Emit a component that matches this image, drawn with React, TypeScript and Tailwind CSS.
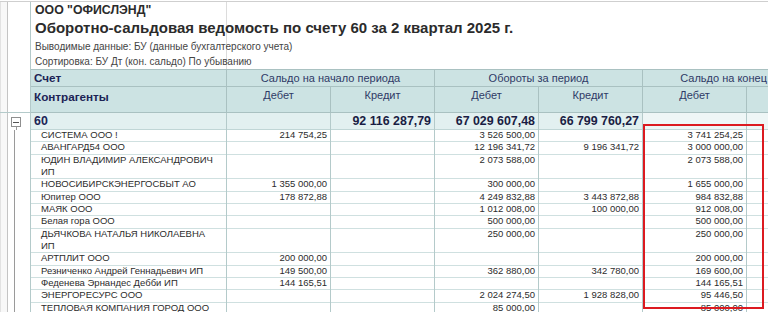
import React from 'react';

type Row = { name: string[]; v: string[] };

const rows: Row[] = [
  { name: ['СИСТЕМА ООО !'], v: ['214 754,25', '', '3 526 500,00', '', '3 741 254,25'] },
  { name: ['АВАНГАРД54 ООО'], v: ['', '', '12 196 341,72', '9 196 341,72', '3 000 000,00'] },
  { name: ['ЮДИН ВЛАДИМИР АЛЕКСАНДРОВИЧ', 'ИП'], v: ['', '', '2 073 588,00', '', '2 073 588,00'] },
  { name: ['НОВОСИБИРСКЭНЕРГОСБЫТ АО'], v: ['1 355 000,00', '', '300 000,00', '', '1 655 000,00'] },
  { name: ['Юпитер ООО'], v: ['178 872,88', '', '4 249 832,88', '3 443 872,88', '984 832,88'] },
  { name: ['МАЯК ООО'], v: ['', '', '1 012 008,00', '100 000,00', '912 008,00'] },
  { name: ['Белая гора ООО'], v: ['', '', '500 000,00', '', '500 000,00'] },
  { name: ['ДЬЯЧКОВА НАТАЛЬЯ НИКОЛАЕВНА', 'ИП'], v: ['', '', '250 000,00', '', '250 000,00'] },
  { name: ['АРТПЛИТ ООО'], v: ['200 000,00', '', '', '', '200 000,00'] },
  { name: ['Резниченко Андрей Геннадьевич ИП'], v: ['149 500,00', '', '362 880,00', '342 780,00', '169 600,00'] },
  { name: ['Феденева Эрнандес Дебби ИП'], v: ['144 165,51', '', '', '', '144 165,51'] },
  { name: ['ЭНЕРГОРЕСУРС ООО'], v: ['', '', '2 024 274,50', '1 928 828,00', '95 446,50'] },
  { name: ['ТЕПЛОВАЯ КОМПАНИЯ ГОРОД ООО'], v: ['', '', '85 000,00', '', '85 000,00'] },
];

// left strip with the tree lines
const Gutter: React.FC<{ tree?: boolean; bottom?: boolean }> = ({ tree, bottom }) => (
  <div className={`w-[31px] shrink-0 flex border-r border-[#b4caca] bg-white ${bottom ? 'border-b' : ''}`}>
    <div className="w-[8px] shrink-0 border-l border-r border-l-[#e2e2e2] border-r-[#c4c4c4] bg-[#f8f8f8]" />
    {tree && <div className="w-[7px] shrink-0 border-r border-[#9a9a9a]" />}
  </div>
);

const DataRow: React.FC<{ row: Row }> = ({ row }) => {
  const h = row.name.length > 1 ? 'h-[24.66px]' : 'h-[12.33px]';
  return (
    <div className={`flex ${h} text-[9.5px] leading-[12px] text-[#2c2c2c]`}>
      <Gutter tree />
      <div className="w-[196px] shrink-0 border-r border-b border-r-[#b4caca] border-b-[#cfe0e0] pl-[10px] -mt-px">
        {row.name.map((n) => (
          <div key={n} className="whitespace-nowrap">{n}</div>
        ))}
      </div>
      {row.v.map((x, i) => (
        <div
          key={i}
          className="w-[104px] shrink-0 border-r border-b border-r-[#b4caca] border-b-[#cfe0e0] text-right pr-[3px] -mt-px"
        >
          {x}
        </div>
      ))}
      <div className="w-[104px] shrink-0 border-r border-b border-r-[#b4caca] border-b-[#cfe0e0]" />
    </div>
  );
};

export default function App() {
  return (
    <div className="relative w-[768px] h-[312px] overflow-hidden bg-white font-['Liberation_Sans',Arial,sans-serif]">
      {/* report title */}
      <div className="flex h-[68px] mt-px border-t border-[#cfcfcf]">
        <Gutter />
        <div className="flex-1 min-w-0 pl-[4px] bg-[linear-gradient(to_right,transparent_195px,#dcdcdc_195px,#dcdcdc_196px,transparent_196px)]">
          <div className="h-[16px] leading-[16px] text-[12.3px] font-bold text-[#2b2b2b] whitespace-nowrap">ООО "ОФИСЛЭНД"</div>
          <div className="h-[19px] leading-[19px] text-[15px] font-bold text-[#2b2b2b] whitespace-nowrap">
            Оборотно-сальдовая ведомость по счету 60 за 2 квартал 2025 г.
          </div>
          <div className="mt-[3px] h-[14px] leading-[14px] text-[10px] text-[#444] whitespace-nowrap">
            Выводимые данные: БУ (данные бухгалтерского учета)
          </div>
          <div className="mt-[1px] h-[14px] leading-[14px] text-[10px] text-[#444] whitespace-nowrap">
            Сортировка: БУ Дт (кон. сальдо) По убыванию
          </div>
        </div>
      </div>

      {/* table header */}
      <div className="flex h-[18px] text-[11px] text-[#2f3a66]">
        <div className="w-[31px] shrink-0 flex border-r border-[#b4caca]">
          <div className="w-[8px] shrink-0 border-l border-r border-l-[#e2e2e2] border-r-[#c4c4c4] bg-[#f8f8f8]" />
        </div>
        <div className="w-[196px] shrink-0 flex items-center pl-[3px] bg-[#cce3e3] border-y border-r border-[#a9c1c1] text-[11.7px] font-bold text-[#1c2456]">
          Счет
        </div>
        {['Сальдо на начало периода', 'Обороты за период', 'Сальдо на конец периода'].map((t) => (
          <div
            key={t}
            className="w-[208px] shrink-0 flex items-center justify-center bg-[#cce3e3] border-y border-r border-[#a9c1c1] whitespace-nowrap"
          >
            {t}
          </div>
        ))}
      </div>
      <div className="flex h-[26px] text-[11px] text-[#2f3a66]">
        <div className="w-[31px] shrink-0 flex border-r border-b border-[#b4caca]">
          <div className="w-[8px] shrink-0 border-l border-r border-l-[#e2e2e2] border-r-[#c4c4c4] bg-[#f8f8f8]" />
        </div>
        <div className="w-[196px] shrink-0 pl-[3px] pt-[3px] leading-[14px] bg-[#cce3e3] border-b border-r border-[#a9c1c1] text-[11.7px] font-bold text-[#1c2456]">
          Контрагенты
        </div>
        {['Дебет', 'Кредит', 'Дебет', 'Кредит', 'Дебет', 'Кредит'].map((t, i) => (
          <div
            key={i}
            className="w-[104px] shrink-0 pt-[2px] leading-[13px] text-center bg-[#cce3e3] border-b border-r border-[#a9c1c1]"
          >
            {t}
          </div>
        ))}
      </div>

      {/* account total */}
      <div className="flex h-[17px] text-[12.4px] font-bold text-[#1a1d44]">
        <div className="w-[31px] shrink-0 flex border-r border-[#b4caca]">
          <div className="w-[8px] shrink-0 border-l border-r border-l-[#e2e2e2] border-r-[#c4c4c4] bg-[#f8f8f8]" />
          <div className="flex flex-col items-center w-[14px] pl-[2px]">
            <div className="mt-[4px] w-[10px] h-[10px] border border-[#8f8f8f] bg-white flex items-center justify-center">
              <div className="w-[6px] h-px bg-[#555]" />
            </div>
            <div className="flex-1 w-px bg-[#9a9a9a]" />
          </div>
        </div>
        <div className="w-[196px] shrink-0 flex items-center pl-[3px] bg-[#e2f0f0] border-b border-r border-b-[#c0d6d6] border-r-[#b4caca] text-[#1c2456]">
          60
        </div>
        {['', '92 116 287,79', '67 029 607,48', '66 799 760,27', '', ''].map((x, i) => (
          <div
            key={i}
            className={`w-[104px] shrink-0 flex items-center justify-end pr-[3px] border-b border-r border-b-[#c0d6d6] border-r-[#b4caca] ${
              i < 4 ? 'bg-[#e2f0f0]' : 'bg-[#eef6f6]'
            }`}
          >
            {x}
          </div>
        ))}
      </div>

      {rows.map((r) => (
        <DataRow key={r.name[0]} row={r} />
      ))}

      {/* highlight frame */}
      <div className="absolute left-[643px] top-[124px] w-[121px] h-[185px] border-2 border-[#dc1a20]" />
    </div>
  );
}
